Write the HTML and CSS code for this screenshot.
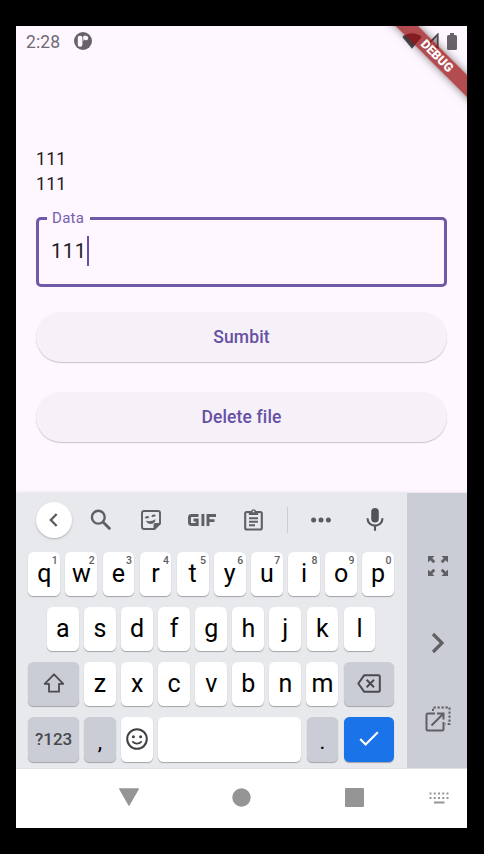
FILE: index.html
```html
<!DOCTYPE html>
<html lang="en">
<head>
<meta charset="utf-8">
<title>Data</title>
<link rel="stylesheet" href="styles.css">
</head>
<body>
<div class="screen">
  <header class="status">
    <span class="clock">2:28</span>
    <svg class="status-app" width="18" height="18" viewBox="0 0 18 18"><circle cx="9" cy="9" r="9" fill="#68636a"/><rect x="3.800" y="3.8" width="4.600" height="11" rx="2" fill="#fef7ff"/><path d="M9.200 4.500Q9.300 3.700 10 3.700h1.800a2.300 2.300 0 1 1-1.900 3.400v1.600h-.7z" fill="#fef7ff"/></svg>
    <svg class="wifi" width="20" height="16" viewBox="0 0 20 16"><path d="M.3 4C5.500-1 14.500-1 19.700 4L10 15.700z" fill="#504c52"/></svg>
    <svg class="signal" width="15" height="16" viewBox="0 0 15 16"><path d="M1 14.500 13.700 1.500v13z" fill="none" stroke="#504c52" stroke-width="1.800"/><path d="M9 6.500v8h4.700V1.500z" fill="#59555b" opacity=".3"/></svg>
    <svg class="battery" width="10" height="17" viewBox="0 0 10 17"><path d="M3 0h4v2h1.500Q10 2 10 3.500v12Q10 17 8.500 17h-7Q0 17 0 15.500v-12Q0 2 1.500 2H3z" fill="#68636a"/></svg>
  </header>
  <div class="debug">DEBUG</div>

  <main class="content">
    <p class="line">111</p>
    <p class="line">111</p>
    <fieldset class="field">
      <legend>Data</legend>
      <div class="value">111<span class="caret"></span></div>
    </fieldset>
    <div class="btn">Sumbit</div>
    <div class="btn">Delete file</div>
  </main>

  <section class="keyboard">
    <div class="board">
      <div class="tools">
        <span class="tool back"><svg width="24" height="24" viewBox="0 0 24 24"><path d="M14.700 6 8.800 12l5.900 6" fill="none" stroke="#5b5c5f" stroke-width="2.300"/></svg></span>
        <span class="tool search"><svg width="22" height="22" viewBox="0 0 22 22" fill="none" stroke="#5f6063"><circle cx="8.300" cy="8.200" r="6.400" stroke-width="2.400"/><path d="m13 13 7.200 7.200" stroke-width="2.900"/></svg></span>
        <span class="tool sticker"><svg width="20" height="20" viewBox="0 0 20 20"><path d="M3 1h14q2 0 2 2v10.500L13.500 19H3q-2 0-2-2V3q0-2 2-2z" fill="none" stroke="#5f6063" stroke-width="1.900"/><path d="M12.500 19.500V15q0-2 2-2h5z" fill="#5f6063"/><path d="M5 10.800q5 1.300 9.500-1.500-.5 4.500-4.500 4.700-3.500.1-5-3.200z" fill="#5f6063"/><path d="M4.500 8.300q1.300-2 3.300-.7M11 6.700q1.500-2 3.300-.6" fill="none" stroke="#5f6063" stroke-width="1.900"/></svg></span>
        <span class="tool gif"><svg width="28" height="12" viewBox="0 0 28 12" fill="none" stroke="#5f6063" stroke-width="2.900"><path d="M10.500 1.500H3.500Q1.500 1.500 1.500 3.500v5q0 2 2 2h5.700V6H5.500M14.900 0v12M20 12V1.500h8M20 6.600h6.500"/></svg></span>
        <span class="tool clip"><svg width="19" height="23" viewBox="0 0 19 23"><rect x="1.200" y="4" width="16.600" height="17.500" rx="1.500" fill="none" stroke="#5f6063" stroke-width="2.100"/><path d="M4.800 3.300h2.100a2.700 2.700 0 0 1 5.200 0h2.100V7H4.800z" fill="#5f6063"/><circle cx="9.500" cy="3.500" r=".9" fill="#e8e9ed"/><path d="M5 10.300h9M5 13.700h9M5 17.200h6" stroke="#5f6063" stroke-width="1.900"/></svg></span>
        <span class="divider"></span>
        <span class="tool dots"><svg width="20" height="6" viewBox="0 0 20 6" fill="#5b5c5f"><circle cx="2.600" cy="3" r="2.500"/><circle cx="10" cy="3" r="2.500"/><circle cx="17.400" cy="3" r="2.500"/></svg></span>
        <span class="tool mic"><svg width="18" height="23" viewBox="0 0 18 23"><rect x="5.200" y="0" width="7.600" height="14.500" rx="3.800" fill="#525356"/><path d="M1.500 10.300C1.500 20 16.500 20 16.500 10.300M9 17v5.700" fill="none" stroke="#525356" stroke-width="2.100"/></svg></span>
      </div>
      <div class="row">
        <span class="key">q<sup>1</sup></span><span class="key">w<sup>2</sup></span><span class="key">e<sup>3</sup></span><span class="key">r<sup>4</sup></span><span class="key">t<sup>5</sup></span><span class="key">y<sup>6</sup></span><span class="key">u<sup>7</sup></span><span class="key">i<sup>8</sup></span><span class="key">o<sup>9</sup></span><span class="key">p<sup>0</sup></span>
      </div>
      <div class="row home">
        <span class="key">a</span><span class="key">s</span><span class="key">d</span><span class="key">f</span><span class="key">g</span><span class="key">h</span><span class="key">j</span><span class="key">k</span><span class="key">l</span>
      </div>
      <div class="row">
        <span class="key wide dark"><svg width="22" height="20" viewBox="0 0 22 20"><path d="M11 1.300 1.700 10.800H6V18.700h10v-7.900h4.300z" fill="none" stroke="#4a4b4e" stroke-width="1.800" stroke-linejoin="round"/></svg></span><span class="key">z</span><span class="key">x</span><span class="key">c</span><span class="key">v</span><span class="key">b</span><span class="key">n</span><span class="key">m</span><span class="key wide dark"><svg width="24" height="19" viewBox="0 0 24 19" fill="none" stroke="#4a4b4e" stroke-width="2"><path d="M7.300 1.200H21.500q1.300 0 1.300 1.300v14q0 1.300-1.300 1.300H7.300L1.300 9.500z" stroke-linejoin="round"/><path d="m9.600 5.800 7.400 7.400m0-7.400-7.400 7.400"/></svg></span>
      </div>
      <div class="row last">
        <span class="key wide dark sym">?123</span><span class="key dark punct">,</span><span class="key"><svg width="22" height="22" viewBox="0 0 22 22"><circle cx="11" cy="11" r="9.800" fill="none" stroke="#3f4043" stroke-width="2"/><circle cx="7.400" cy="8.800" r="1.500" fill="#3f4043"/><circle cx="14.600" cy="8.800" r="1.500" fill="#3f4043"/><path d="M6.300 13.300q4.700 4.600 9.400 0" fill="none" stroke="#3f4043" stroke-width="1.800"/></svg></span><span class="key space"></span><span class="key dark punct">.</span><span class="key wide enter"><svg width="20" height="16" viewBox="0 0 20 16"><path d="m1.200 8 5.400 5.500L18.800 1.300" fill="none" stroke="#fff" stroke-width="2.200"/></svg></span>
      </div>
    </div>
    <aside class="side">
      <svg width="22" height="22" viewBox="0 0 22 22" fill="#5f6063"><path id="arrow" d="M1 1h6.500L5.300 3.200l3 3-2 2-3-3L1 7.500z"/><use href="#arrow" transform="matrix(-1 0 0 1 22 0)"/><use href="#arrow" transform="matrix(1 0 0 -1 0 22)"/><use href="#arrow" transform="matrix(-1 0 0 -1 22 22)"/></svg>
      <svg width="14" height="22" viewBox="0 0 14 22"><path d="m2 2 9 9-9 9" fill="none" stroke="#5f6063" stroke-width="3.200"/></svg>
      <svg width="26" height="26" viewBox="0 0 26 26" fill="none" stroke="#5f6063" stroke-width="2"><path d="M10 7.500H3q-1.500 0-1.500 1.500v14q0 1.500 1.500 1.500h14q1.500 0 1.500-1.500v-7M12 7.500h6.500v6M18 8 6.500 19.500"/><path d="M8 5V1.500h16.500V18H20.500" stroke-dasharray="2.300 1.700"/></svg>
    </aside>
  </section>

  <nav class="nav">
    <svg width="22" height="19" viewBox="0 0 22 19"><path d="M1.800 1h18.400L11 17z" fill="#959595" stroke="#959595" stroke-width="1.500" stroke-linejoin="round"/></svg>
    <svg width="19" height="19" viewBox="0 0 19 19"><circle cx="9.500" cy="9.500" r="9.200" fill="#959595"/></svg>
    <svg width="19" height="19" viewBox="0 0 19 19"><rect width="19" height="19" rx="1" fill="#959595"/></svg>
    <svg width="20" height="12" viewBox="0 0 20 12" stroke="#959595" stroke-width="2"><path d="M.5 1.500h19M.5 6h19" stroke-dasharray="2 2.250"/><path d="M5 10.500h10.500"/></svg>
  </nav>
</div>
</body>
</html>
```

FILE: styles.css
```css
* { box-sizing: border-box; }
body {
  margin: 0;
  padding: 26px 17px 26px 16px;
  background: #000;
  font-family: Roboto, sans-serif;
}
svg { display: block; flex: none; }
.screen {
  position: relative;
  width: 451px;
  height: 802px;
  overflow: hidden;
  background: #fef7ff;
  display: flex;
  flex-direction: column;
}
.status {
  height: 30px;
  padding: 0 10px;
  display: flex;
  align-items: center;
  color: #706b72;
}
.clock { font-size: 17.5px; letter-spacing: 0.1px; padding-top: 2px; }
.status-app { margin-left: 14px; }
.wifi { margin-left: auto; }
.signal { margin: 0 8px 0 2px; }
.debug {
  position: absolute;
  top: 22px;
  right: -40px;
  width: 140px;
  height: 15.8px;
  transform: rotate(45deg);
  background: rgba(151, 12, 16, 0.73);
  box-shadow: 0 0 8px rgba(0, 0, 0, 0.5);
  color: #fff;
  font-size: 12.500px;
  font-weight: 900;
  line-height: 16px;
  text-align: center;
}
.content {
  flex: 1;
  padding: 91px 20px 0;
}
.line {
  margin: 0;
  height: 25px;
  font-size: 17.5px;
  line-height: 25px;
  letter-spacing: 0.32px;
  color: #1d1b20;
}
.field {
  margin: 12px 0 0;
  padding: 0 12px;
  height: 77.500px;
  min-width: 0;
  border: 3px solid #6f59a9;
  border-radius: 5px;
}
.field legend {
  margin-left: -4px;
  padding: 0 6px 0 5px;
  font-size: 15px;
  line-height: 18px;
  letter-spacing: 0.3px;
  color: #7560ad;
}
.value {
  display: flex;
  align-items: center;
  height: 30px;
  margin-top: 9px;
  font-size: 20px;
  letter-spacing: 0.62px;
  color: #1d1b20;
}
.caret { width: 2px; height: 30px; background: #6750a4; }
.btn {
  height: 50px;
  margin-top: 25.500px;
  border-radius: 25px;
  background: #f6f1f9;
  box-shadow: 0 1px 1px rgba(0, 0, 0, 0.22);
  color: #6750a4;
  font-size: 17.5px;
  font-weight: 500;
  letter-spacing: 0.12px;
  line-height: 50px;
  text-align: center;
}
.btn + .btn { margin-top: 30px; }
.keyboard {
  height: 275px;
  display: flex;
  background: #e8e9ed;
  box-shadow: 0 0 3px rgba(80, 70, 90, 0.2);
}
.board { width: 391px; padding: 0 13px 0 12.400px; }
.tools {
  height: 59px;
  display: flex;
  align-items: center;
  padding: 0 10px 6px 7.600px;
}
.back {
  width: 36px;
  height: 36px;
  border-radius: 50%;
  display: grid;
  place-items: center;
  background: #fff;
  box-shadow: 0 1px 2px rgba(0, 0, 0, 0.25);
}
.search { margin-left: 18px; }
.sticker { margin-left: 29px; }
.gif { margin-left: 27px; }
.clip { margin-left: 28px; }
.divider { width: 1px; height: 26px; margin-left: 24.500px; background: #cdced2; }
.dots { margin-left: 23px; }
.mic { margin-left: auto; }
.row {
  display: flex;
  gap: 5.300px;
  height: 44px;
  margin-bottom: 10.800px;
}
.home { padding: 0 18.600px; }
.key {
  position: relative;
  flex: 1 1 0;
  display: flex;
  align-items: center;
  justify-content: center;
  padding-bottom: 1px;
  border-radius: 5.500px;
  background: #fff;
  box-shadow: 0 1px 1px rgba(0, 0, 0, 0.3);
  color: #000;
  font-size: 25px;
}
.key sup {
  position: absolute;
  top: 3px;
  right: 2.500px;
  font-size: 10.500px;
  font-weight: 500;
  line-height: 11px;
  color: #5f6063;
}
.wide { flex: 0 0 50.500px; }
.dark { background: #cacdd5; }
.last { height: 45px; margin-top: 11.200px; }
.sym { font-size: 17px; font-weight: 500; color: #47484b; }
.punct { padding-top: 6px; font-size: 22px; }
.space { flex: 0 0 143.300px; }
.enter { background: #1a73e8; }
.side {
  width: 60px;
  display: flex;
  flex-direction: column;
  align-items: center;
  padding: 62px 0 0 1px;
  gap: 54.500px;
  background: #cacdd5;
}
.side svg:last-child { margin-top: -2.500px; }
.nav {
  height: 60px;
  background: #fff;
  border-top: 1px solid #e2e3e7;
  display: flex;
  align-items: center;
  padding: 0 18px 2px 102px;
}
.nav svg:nth-child(2) { margin-left: 92px; }
.nav svg:nth-child(3) { margin-left: 94px; }
.nav svg:nth-child(4) { margin-left: auto; }
```
